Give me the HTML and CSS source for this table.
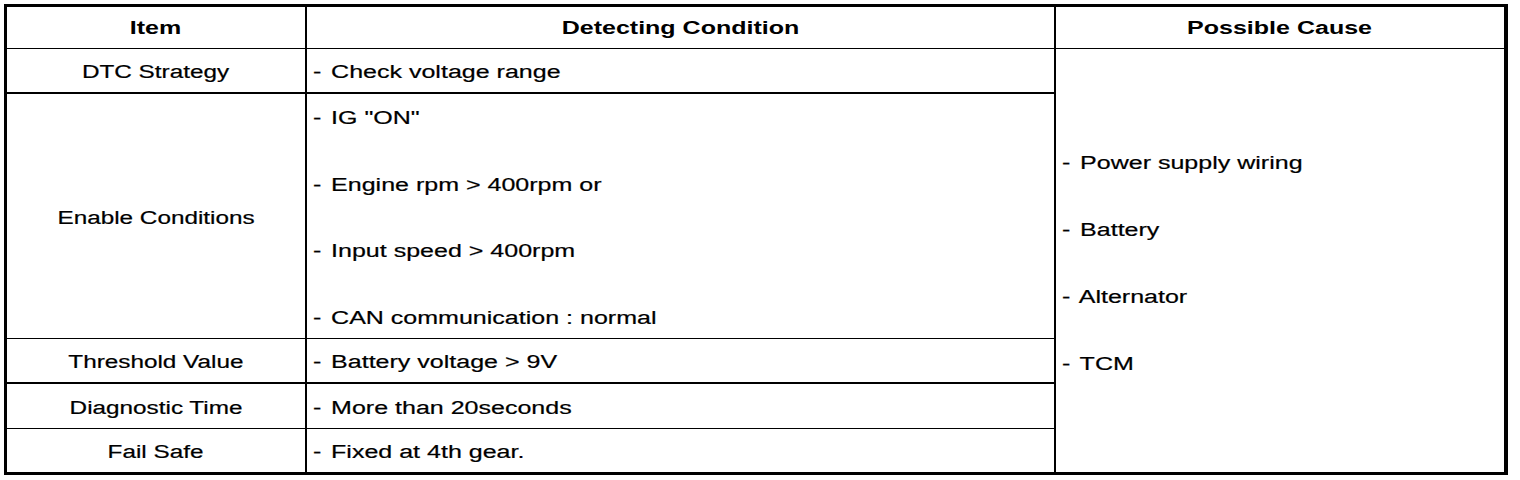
FILE: index.html
```html
<!DOCTYPE html>
<html>
<head>
<meta charset="utf-8">
<link rel="stylesheet" href="styles.css">
</head>
<body>
<div class="tbl">
  <div class="cell c1 head r-head"><span class="t b">Item</span></div>
  <div class="cell c2 head r-head"><span class="t b">Detecting Condition</span></div>
  <div class="cell c3 head r-head"><span class="t b">Possible Cause</span></div>

  <div class="cell c1 center r-dtc"><span class="t">DTC Strategy</span></div>
  <div class="cell c2 left r-dtc"><span class="t l"><span class="d">-</span> Check voltage range</span></div>

  <div class="cell c3 left causes">
    <span class="t l"><span class="d">-</span> Power supply wiring</span>
    <span class="t l"><span class="d">-</span> Battery</span>
    <span class="t l"><span class="d">-</span> Alternator</span>
    <span class="t l"><span class="d">-</span> TCM</span>
  </div>

  <div class="cell c1 center r-enable"><span class="t">Enable Conditions</span></div>
  <div class="cell c2 left r-enable list">
    <span class="t l"><span class="d">-</span> IG "ON"</span>
    <span class="t l"><span class="d">-</span> Engine rpm &gt; 400rpm or</span>
    <span class="t l"><span class="d">-</span> Input speed &gt; 400rpm</span>
    <span class="t l"><span class="d">-</span> CAN communication : normal</span>
  </div>

  <div class="cell c1 center r-thr"><span class="t">Threshold Value</span></div>
  <div class="cell c2 left r-thr"><span class="t l"><span class="d">-</span> Battery voltage &gt; 9V</span></div>

  <div class="cell c1 center r-diag"><span class="t">Diagnostic Time</span></div>
  <div class="cell c2 left r-diag"><span class="t l"><span class="d">-</span> More than 20seconds</span></div>

  <div class="cell c1 center r-fail"><span class="t">Fail Safe</span></div>
  <div class="cell c2 left r-fail"><span class="t l"><span class="d">-</span> Fixed at 4th gear.</span></div>
</div>
</body>
</html>
```
FILE: styles.css
```css
html, body {
  margin: 0;
  padding: 0;
  background: #fff;
}

body {
  padding: 4px;
  font-family: "Liberation Sans", Arial, sans-serif;
  font-size: 18px;
  line-height: 20px;
  color: #000;
}

.tbl {
  display: grid;
  width: 1497px;
  grid-template-columns: 300px 749px 448px;
  grid-template-rows: 42px 45px 245px 45px 45px 43px;
  border-top: 3px solid #000;
  border-left: 3px solid #000;
  border-right: 4px solid #000;
  border-bottom: 3px solid #000;
}

.cell {
  box-sizing: border-box;
  display: flex;
  align-items: center;
  white-space: nowrap;
}

.c1, .c2 {
  border-right: 2px solid #000;
}

.c1 { grid-column: 1; }
.c2 { grid-column: 2; }
.c3 { grid-column: 3; }

.head {
  justify-content: center;
  padding-top: 1px;
  border-bottom: 1px solid #000;
}

.center {
  justify-content: center;
  padding-top: 3px;
}

.left {
  justify-content: flex-start;
  padding-left: 6px;
  padding-top: 3px;
}

.r-dtc { border-bottom: 2px solid #000; }
.r-enable { border-bottom: 1px solid #000; }
.r-thr { border-bottom: 2px solid #000; }
.r-diag { border-bottom: 1px solid #000; }

.list {
  flex-direction: column;
  align-items: flex-start;
  justify-content: flex-start;
  padding-top: 14px;
  gap: 46.5px;
}

.causes {
  grid-row: 2 / 7;
  flex-direction: column;
  align-items: flex-start;
  justify-content: center;
  gap: 46.7px;
  padding-top: 6px;
}

.t {
  display: inline-block;
  transform: scaleX(1.35);
  transform-origin: center center;
  -webkit-text-stroke: 0.2px #000;
}

.t.l {
  transform: scaleX(1.39);
  transform-origin: left center;
}

.d {
  margin-right: 2px;
}

.t.b {
  font-weight: bold;
  transform: scaleX(1.39);
  -webkit-text-stroke: 0;
}
```
